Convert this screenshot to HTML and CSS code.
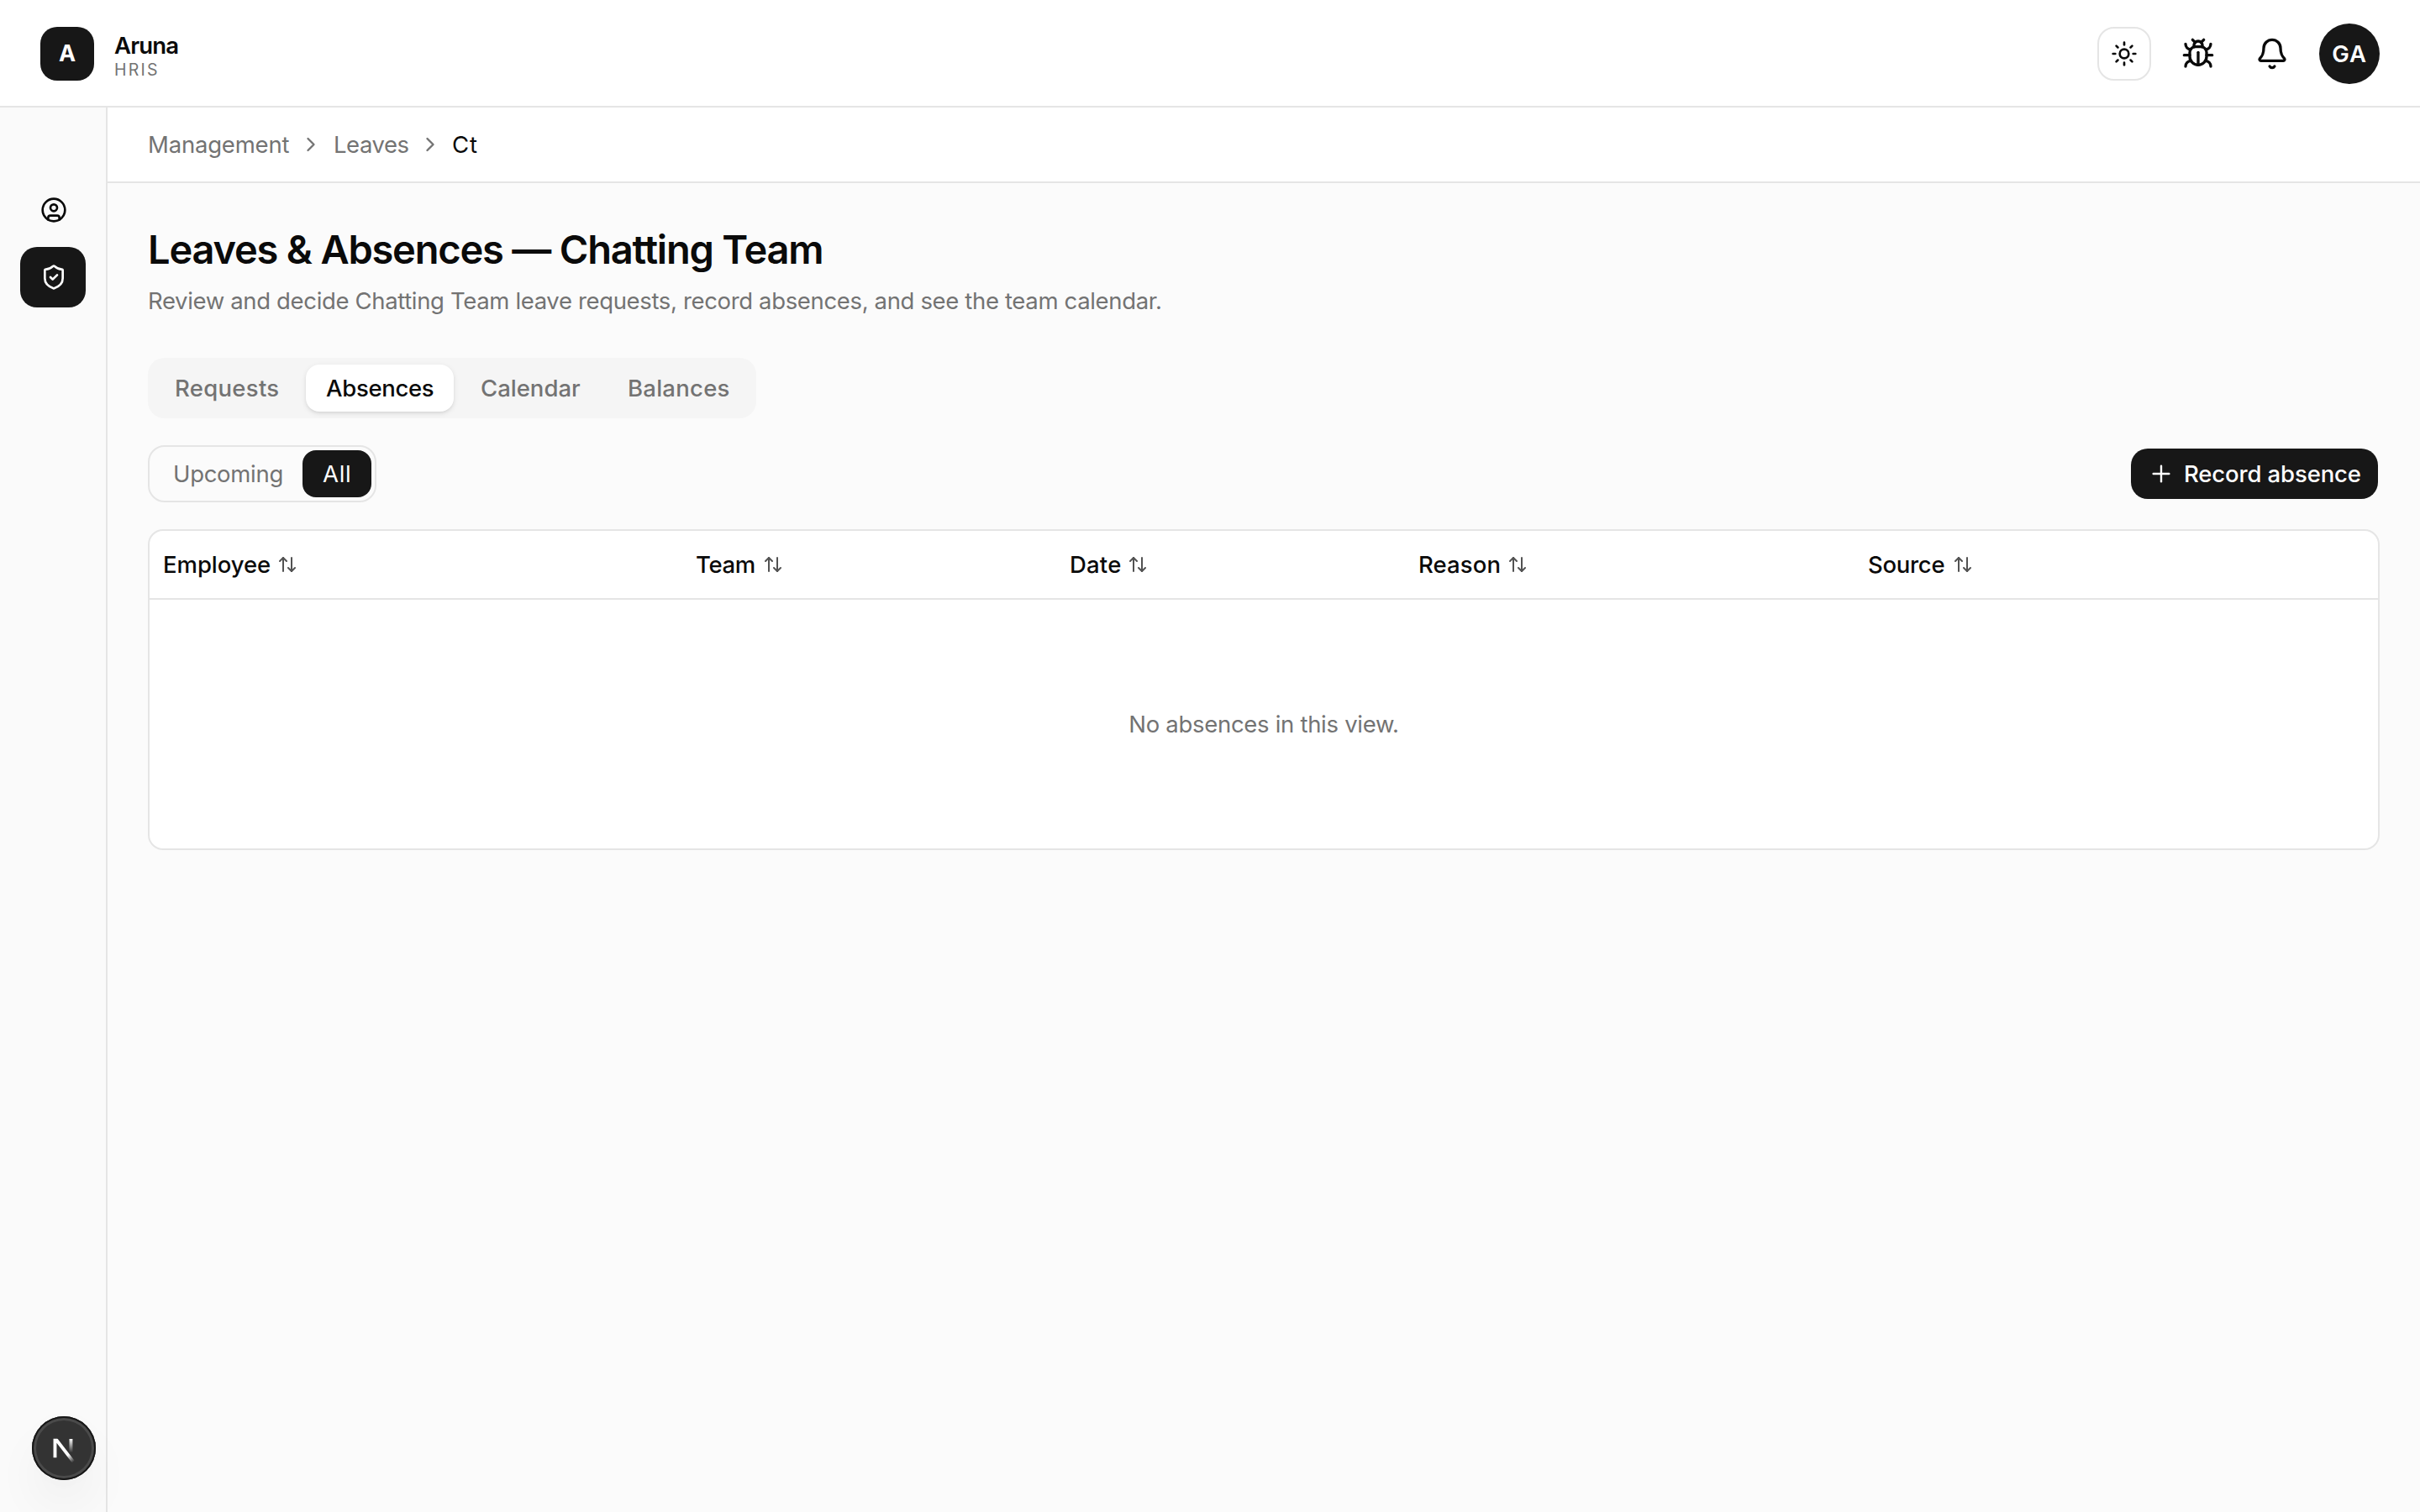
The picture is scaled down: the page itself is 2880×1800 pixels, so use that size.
FILE: index.html
```
<!DOCTYPE html>
<html lang="en">
<head>
<meta charset="utf-8">
<title>Leaves &amp; Absences — Aruna HRIS</title>
<link rel="stylesheet" href="styles.css">
</head>
<body>
<svg class="sprite" aria-hidden="true">
  <symbol id="chevron" viewBox="0 0 24 24"><path d="m9 18 6-6-6-6"/></symbol>
  <symbol id="sort" viewBox="0 0 24 24"><path d="m21 16-4 4-4-4"/><path d="M17 20V4"/><path d="m3 8 4-4 4 4"/><path d="M7 4v16"/></symbol>
</svg>

<header class="topbar">
  <div class="brand">
    <div class="brand-mark">A</div>
    <div class="brand-text">
      <span class="brand-name">Aruna</span>
      <span class="brand-sub">HRIS</span>
    </div>
  </div>
  <div class="actions">
    <button class="icon-btn outlined" aria-label="Theme">
      <svg class="icon i32" viewBox="0 0 24 24"><circle cx="12" cy="12" r="4"/><path d="M12 2v2"/><path d="M12 20v2"/><path d="m4.93 4.93 1.41 1.41"/><path d="m17.66 17.66 1.41 1.41"/><path d="M2 12h2"/><path d="M20 12h2"/><path d="m6.34 17.66-1.41 1.41"/><path d="m19.07 4.93-1.41 1.41"/></svg>
    </button>
    <button class="icon-btn" aria-label="Report a bug">
      <svg class="icon i40" viewBox="0 0 24 24"><path d="m8 2 1.88 1.88"/><path d="M14.12 3.88 16 2"/><path d="M9 7.13v-1a3.003 3.003 0 1 1 6 0v1"/><path d="M12 20c-3.3 0-6-2.7-6-6v-3a4 4 0 0 1 4-4h4a4 4 0 0 1 4 4v3c0 3.3-2.7 6-6 6"/><path d="M12 20v-9"/><path d="M6.53 9C4.6 8.8 3 7.1 3 5"/><path d="M6 13H2"/><path d="M3 21c0-2.1 1.7-3.9 3.8-4"/><path d="M20.97 5c0 2.1-1.6 3.8-3.5 4"/><path d="M22 13h-4"/><path d="M17.2 17c2.1.1 3.8 1.9 3.8 4"/></svg>
    </button>
    <button class="icon-btn" aria-label="Notifications">
      <svg class="icon i40" viewBox="0 0 24 24"><path d="M10.268 21a2 2 0 0 0 3.464 0"/><path d="M3.262 15.326A1 1 0 0 0 4 17h16a1 1 0 0 0 .74-1.673C19.41 13.956 18 12.499 18 8A6 6 0 0 0 6 8c0 4.499-1.411 5.956-2.738 7.326"/></svg>
    </button>
    <div class="avatar">GA</div>
  </div>
</header>

<div class="shell">
  <nav class="sidebar">
    <a class="nav-item" aria-label="Personal">
      <svg class="icon i32" viewBox="0 0 24 24"><circle cx="12" cy="12" r="10"/><circle cx="12" cy="10" r="3"/><path d="M7 20.662V19a2 2 0 0 1 2-2h6a2 2 0 0 1 2 2v1.662"/></svg>
    </a>
    <a class="nav-item active" aria-label="Management">
      <svg class="icon i32" viewBox="0 0 24 24"><path d="M20 13c0 5-3.5 7.5-7.66 8.95a1 1 0 0 1-.67-.01C7.5 20.5 4 18 4 13V6a1 1 0 0 1 1-1c2 0 4.5-1.2 6.24-2.72a1.17 1.17 0 0 1 1.52 0C14.51 3.81 17 5 19 5a1 1 0 0 1 1 1z"/><path d="m9 12 2 2 4-4"/></svg>
    </a>
  </nav>

  <div class="page">
    <div class="breadcrumb">
      <span class="crumb crumb-management">Management</span>
      <svg class="icon i28"><use href="#chevron"/></svg>
      <span class="crumb crumb-leaves">Leaves</span>
      <svg class="icon i28"><use href="#chevron"/></svg>
      <span class="crumb crumb-current">Ct</span>
    </div>

    <main class="content">
      <h1>Leaves &amp; Absences — Chatting Team</h1>
      <p class="subtitle">Review and decide Chatting Team leave requests, record absences, and see the team calendar.</p>

      <div class="tabs">
        <span class="tab tab-requests">Requests</span>
        <span class="tab tab-absences active">Absences</span>
        <span class="tab tab-calendar">Calendar</span>
        <span class="tab tab-balances">Balances</span>
      </div>

      <div class="toolbar">
        <div class="toggle">
          <span class="toggle-item toggle-upcoming">Upcoming</span>
          <span class="toggle-item toggle-all active">All</span>
        </div>
        <button class="primary">
          <svg class="icon i32 thin" viewBox="0 0 24 24"><path d="M5 12h14"/><path d="M12 5v14"/></svg>
          <span>Record absence</span>
        </button>
      </div>

      <div class="table-card">
        <table>
          <colgroup><col class="col-employee"><col class="col-team"><col class="col-date"><col class="col-reason"><col class="col-source"></colgroup>
          <thead>
            <tr>
              <th><div class="sort"><span class="th-employee">Employee</span><svg class="icon i24"><use href="#sort"/></svg></div></th>
              <th><div class="sort"><span class="th-team">Team</span><svg class="icon i24"><use href="#sort"/></svg></div></th>
              <th><div class="sort"><span class="th-date">Date</span><svg class="icon i24"><use href="#sort"/></svg></div></th>
              <th><div class="sort"><span class="th-reason">Reason</span><svg class="icon i24"><use href="#sort"/></svg></div></th>
              <th><div class="sort"><span class="th-source">Source</span><svg class="icon i24"><use href="#sort"/></svg></div></th>
            </tr>
          </thead>
          <tbody>
            <tr><td class="empty" colspan="5">No absences in this view.</td></tr>
          </tbody>
        </table>
      </div>
    </main>
  </div>
</div>

<div class="dev-badge">
  <svg viewBox="1 1 38 38">
    <defs>
      <linearGradient id="fade-diagonal" x1="9.956" y1="11.123" x2="15.478" y2="17.967" gradientUnits="userSpaceOnUse"><stop stop-color="#fff"/><stop offset=".604" stop-color="#fff" stop-opacity="0"/></linearGradient>
      <linearGradient id="fade-stem" x1="11.822" y1="1.4" x2="11.791" y2="9.625" gradientUnits="userSpaceOnUse"><stop stop-color="#fff"/><stop offset="1" stop-color="#fff" stop-opacity="0"/></linearGradient>
      <clipPath id="badge-clip"><rect x="0" y="1.4" width="18" height="16"/></clipPath>
    </defs>
    <g transform="translate(12.4 13)" fill="none" stroke-width="1.95">
      <g clip-path="url(#badge-clip)">
        <path d="M13.3 15.2 2.34 1v11.6" stroke="url(#fade-diagonal)"/>
        <path d="M11.825 1.5v11.6" stroke="url(#fade-stem)"/>
      </g>
    </g>
  </svg>
</div>
</body>
</html>
```
FILE: styles.css
```
:root {
  --ink: #0a0a0a;
  --muted: #737373;
  --primary: #171717;
  --line: #e5e5e5;
}

* { box-sizing: border-box; }

body {
  margin: 0;
  height: 1800px;
  display: flex;
  flex-direction: column;
  overflow: hidden;
  background: #fbfbfb;
  color: var(--ink);
  font: 400 27.5px/40px Inter, "Liberation Sans", sans-serif;
  white-space: nowrap;
}

button { font: inherit; border: 0; background: none; padding: 0; color: inherit; }

.sprite { display: none; }
.icon {
  display: block;
  flex: none;
  fill: none;
  stroke: currentColor;
  stroke-width: 2;
  stroke-linecap: round;
  stroke-linejoin: round;
}
.i24 { width: 24px; height: 24px; }
.i28 { width: 28px; height: 28px; }
.i32 { width: 32px; height: 32px; }
.i40 { width: 40px; height: 40px; }
.thin { stroke-width: 1.8; }

/* Top bar */
.topbar {
  height: 128px;
  flex: none;
  display: flex;
  align-items: center;
  justify-content: space-between;
  padding: 2px 48px 0;
  background: #fff;
  border-bottom: 2px solid var(--line);
}
.brand { display: flex; align-items: center; gap: 24px; }
.brand-mark {
  width: 64px;
  height: 64px;
  border-radius: 20px;
  background: var(--primary);
  color: #fff;
  display: grid;
  place-items: center;
  font-size: 27px;
  font-weight: 700;
}
.brand-text { display: flex; flex-direction: column; padding-top: 6px; }
.brand-name { font-weight: 600; line-height: 32px; letter-spacing: -.82px; }
.brand-sub { font-size: 19.5px; line-height: 26px; letter-spacing: 2.2px; color: var(--muted); }

.actions { display: flex; align-items: center; gap: 24px; }
.icon-btn { width: 64px; height: 64px; display: grid; place-items: center; }
.icon-btn.outlined { border: 2px solid var(--line); border-radius: 20px; }
.avatar {
  width: 72px;
  height: 72px;
  border-radius: 50%;
  background: var(--primary);
  color: #fff;
  display: grid;
  place-items: center;
  font-weight: 600;
  letter-spacing: .8px;
}

/* Layout */
.shell { flex: 1; display: flex; min-height: 0; }
.sidebar {
  width: 128px;
  flex: none;
  display: flex;
  flex-direction: column;
  gap: 8px;
  padding: 86px 24px 0;
  background: #fafafa;
  border-right: 2px solid var(--line);
}
.nav-item {
  height: 72px;
  display: flex;
  align-items: center;
  padding-left: 24px;
  border-radius: 20px;
}
.nav-item.active { background: var(--primary); color: #fff; }
.page { flex: 1; min-width: 0; display: flex; flex-direction: column; }

.breadcrumb {
  height: 90px;
  flex: none;
  display: flex;
  align-items: center;
  gap: 12px;
  padding: 0 48px;
  background: #fff;
  border-bottom: 2px solid var(--line);
  color: var(--muted);
}
.crumb-management { width: 168px; letter-spacing: -.2px; }
.crumb-leaves { width: 90px; padding-left: 1px; letter-spacing: -.45px; }
.crumb-current { color: var(--ink); letter-spacing: 1px; }

.content { padding: 46px 48px 0; display: flex; flex-direction: column; }
h1 { margin: 0; font-size: 47px; font-weight: 600; line-height: 66px; letter-spacing: -1.2px; }
.subtitle { margin: 8px 0 0; color: var(--muted); letter-spacing: -.35px; }

/* Tabs */
.tabs {
  align-self: flex-start;
  height: 72px;
  margin-top: 48px;
  padding: 8px;
  display: flex;
  gap: 8px;
  border-radius: 20px;
  background: #f5f5f5;
  color: var(--muted);
  font-weight: 500;
}
.tab { padding: 8px 0 8px 24px; border-radius: 16px; }
.tab.active { background: #fff; color: var(--ink); box-shadow: 0 2px 6px rgba(0,0,0,.1), 0 2px 4px -2px rgba(0,0,0,.1); }
.tab-requests { width: 172px; letter-spacing: .3px; }
.tab-absences { width: 176px; letter-spacing: -.31px; }
.tab-calendar { width: 168px; }
.tab-balances { width: 168px; padding-left: 23px; letter-spacing: .25px; }

/* Toolbar */
.toolbar {
  margin-top: 32px;
  padding-right: 2px;
  display: flex;
  align-items: center;
  justify-content: space-between;
}
.toggle {
  height: 68px;
  padding: 4px;
  display: flex;
  border: 2px solid var(--line);
  border-radius: 20px;
}
.toggle-item { height: 56px; padding: 8px 0 8px 24px; border-radius: 16px; color: var(--muted); }
.toggle-item.active { background: var(--primary); color: #fff; }
.toggle-upcoming { width: 178px; letter-spacing: -.3px; }
.toggle-all { width: 82px; letter-spacing: .7px; }
.primary {
  width: 294px;
  height: 60px;
  display: flex;
  align-items: center;
  gap: 11px;
  padding-left: 20px;
  border-radius: 20px;
  background: var(--primary);
  color: #fff;
  font-weight: 500;
  letter-spacing: -.13px;
}

/* Table */
.table-card {
  height: 382px;
  margin-top: 32px;
  border: 2px solid var(--line);
  border-radius: 18px;
  background: #fff;
  overflow: hidden;
}
table { width: 100%; table-layout: fixed; border-collapse: separate; border-spacing: 0; }
.col-employee { width: 634px; }
.col-team { width: 444px; }
.col-date { width: 415px; }
.col-reason { width: 536px; }
.col-source { width: 623px; }
th { height: 82px; padding: 0 0 0 16px; border-bottom: 2px solid var(--line); font-weight: 500; text-align: left; }
.sort { display: flex; align-items: center; gap: 8px; }
.sort .icon { opacity: .7; }
.th-employee { width: 128px; letter-spacing: -.05px; }
.th-team { width: 72px; letter-spacing: -.35px; }
.th-date { width: 62px; padding-left: 1px; letter-spacing: .2px; }
.th-reason { width: 99px; padding-left: 1px; letter-spacing: .1px; }
.th-source { width: 93px; letter-spacing: -.3px; }
.empty { height: 296px; padding: 0; text-align: center; color: var(--muted); letter-spacing: -.3px; }

/* Floating framework badge */
.dev-badge {
  position: fixed;
  left: 38px;
  top: 1686px;
  width: 76px;
  height: 76px;
  border-radius: 50%;
  background: #333;
  box-shadow: inset 0 0 0 2px #171717, inset 0 0 0 5px #4a4a4a, 0 32px 64px -16px rgba(0,0,0,.12), 0 8px 40px rgba(0,0,0,.02);
}
.dev-badge svg { display: block; width: 76px; height: 76px; }
```
